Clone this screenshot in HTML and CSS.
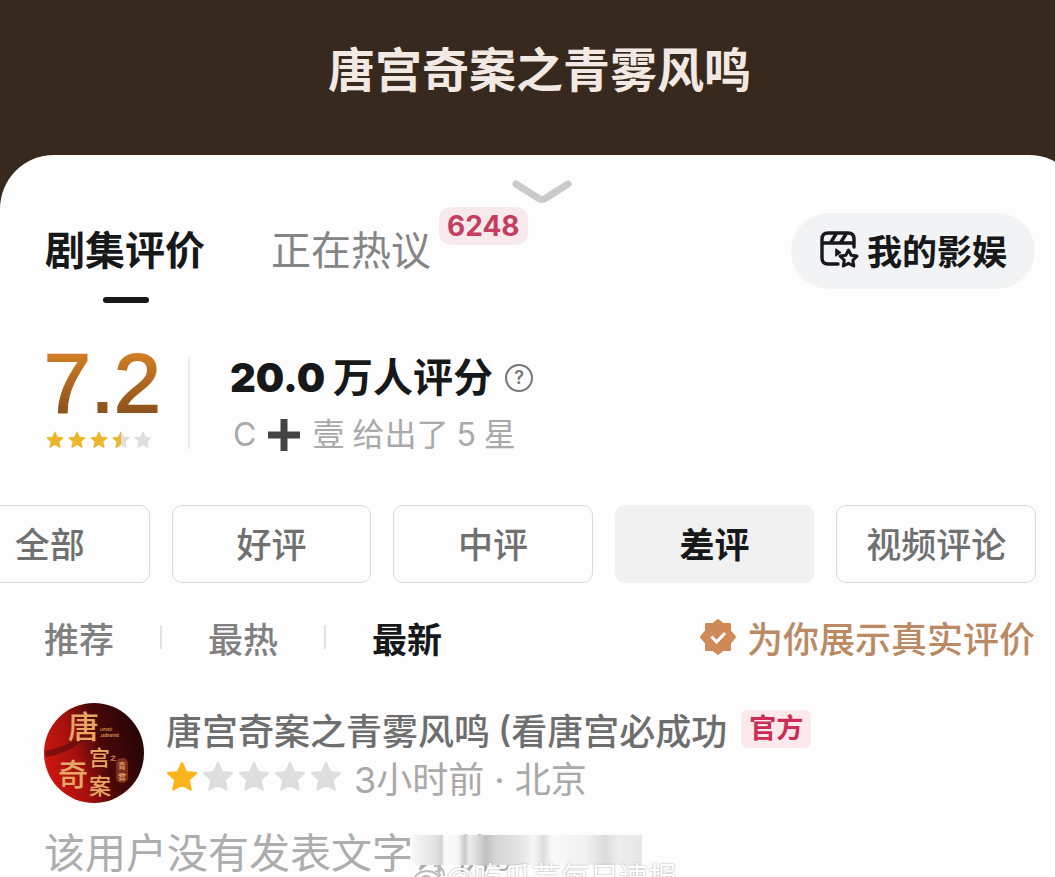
FILE: index.html
```html
<!DOCTYPE html>
<html lang="zh-CN">
<head>
    <meta charset="UTF-8">
    <meta name="viewport" content="width=device-width, initial-scale=1.0">
    <title>唐宫奇案之青雾风鸣</title>
    <link rel="stylesheet" href="styles.css">
</head>
<body>
    <svg class="defs" aria-hidden="true">
        <defs>
            <path id="star" d="M12 1.5l3.1 6.8 7.4.8-5.5 5 1.6 7.4L12 17.8l-6.6 3.7L7 14.1l-5.5-5 7.4-.8z" stroke-width="1.6" stroke-linejoin="round"/>
            <clipPath id="half"><rect x="0" y="0" width="12" height="24"/></clipPath>
        </defs>
    </svg>

    <header class="top-bar">
        <h1>唐宫奇案之青雾风鸣</h1>
    </header>

    <main class="sheet">
        <button class="collapse" aria-label="收起">
            <svg width="60" height="28" viewBox="0 0 60 28"><path d="M4 5l22 14q4 3 8 0L56 5" fill="none" stroke="#cacaca" stroke-width="7" stroke-linecap="round"/></svg>
        </button>

        <nav class="tabs">
            <a href="#reviews" class="tab active">剧集评价</a>
            <a href="#talk" class="tab">正在热议<span class="count">6248</span></a>
            <button class="mine">
                <svg width="40" height="38" viewBox="0 0 40 38" fill="none" stroke="#17181a" stroke-width="3.4" stroke-linejoin="round" stroke-linecap="round">
                    <path d="M19 34H9q-6 0-6-6V9q0-6 6-6h20q6 0 6 6v8M3 13h32M17 4l-5 8M27 4l-5 8"/>
                    <path d="M17 19l5 3.500-5 3.500z" fill="#17181a" stroke-width="1"/>
                    <path d="M29.500 20l2.700 5.200 5.800.9-4.200 4.100 1 5.800-5.300-2.700-5.200 2.700 1-5.800-4.200-4.100 5.800-.9z" stroke-width="3"/>
                </svg>
                我的影娱
            </button>
        </nav>

        <section class="summary" id="reviews">
            <div class="score">
                <strong>7.2</strong>
                <div class="stars small">
                    <svg viewBox="0 0 24 24"><use href="#star"/></svg>
                    <svg viewBox="0 0 24 24"><use href="#star"/></svg>
                    <svg viewBox="0 0 24 24"><use href="#star"/></svg>
                    <svg viewBox="0 0 24 24"><use href="#star" class="off"/><use href="#star" clip-path="url(#half)"/></svg>
                    <svg viewBox="0 0 24 24"><use href="#star" class="off"/></svg>
                </div>
            </div>
            <div class="people">
                <div class="total">
                    <span class="num">20.0</span><span>万人评分</span>
                    <button class="help" aria-label="评分说明">?</button>
                </div>
                <p class="latest">
                    <span>C</span>
                    <svg width="32" height="32" viewBox="0 0 32 32"><path d="M16 0v32M0 16h32" stroke="#444" stroke-width="7"/></svg>
                    <span>壹</span><span>给出了</span><span>5</span><span>星</span>
                </p>
            </div>
        </section>

        <div class="filters">
            <button class="filter">全部</button>
            <button class="filter">好评</button>
            <button class="filter">中评</button>
            <button class="filter active">差评</button>
            <button class="filter">视频评论</button>
        </div>

        <div class="sort">
            <button>推荐</button>
            <button>最热</button>
            <button class="active">最新</button>
            <p class="real">
                <svg width="38" height="38" viewBox="0 0 38 38">
                    <path d="M19 2l5 4h7v7l5 6-5 6v7h-7l-5 4-5-4H7v-7l-5-6 5-6V6h7z" fill="#d08a58" stroke="#d08a58" stroke-width="2" stroke-linejoin="round"/>
                    <path d="M12.500 18.500l5 5.500 8.500-9" fill="none" stroke="#fff" stroke-width="3"/>
                </svg>
                <span>为你展示真实评价</span>
            </p>
        </div>

        <article class="review">
            <div class="author">
                <svg class="avatar" viewBox="0 0 100 100" role="img" aria-label="唐宫奇案">
                    <defs>
                        <linearGradient id="red" x1="0" y1=".7" x2="1" y2=".4">
                            <stop offset="0" stop-color="#d4160f"/>
                            <stop offset=".35" stop-color="#a3100d"/>
                            <stop offset=".6" stop-color="#4a0808"/>
                            <stop offset="1" stop-color="#260506"/>
                        </linearGradient>
                    </defs>
                    <circle cx="50" cy="50" r="50" fill="url(#red)"/>
                    <path d="M1 48Q24 44 40 30L38 38Q24 50 2 54z" fill="#3d0808" opacity=".5"/>
                    <g class="brush">
                        <text x="24" y="35" font-size="31">唐</text>
                        <text x="45" y="62" font-size="21">宫</text>
                        <text x="14" y="82" font-size="30">奇</text>
                        <text x="45" y="91" font-size="22">案</text>
                        <text x="66" y="57" font-size="6">之</text>
                        <text x="56" y="28" font-size="4">Unveil</text>
                        <text x="56" y="34" font-size="4">Jadewind</text>
                    </g>
                    <rect x="72" y="55" width="12" height="25" rx="5" fill="#7c2b1e"/>
                    <g class="brush"><text x="74" y="66" font-size="8">青</text><text x="74" y="77" font-size="8">雾</text></g>
                </svg>
                <div class="info">
                    <div class="name">唐宫奇案之青雾风鸣<span class="paren">(</span>看唐宫必成功<span class="official">官方</span></div>
                    <div class="meta">
                        <div class="stars">
                            <svg viewBox="0 0 24 24"><use href="#star"/></svg>
                            <svg viewBox="0 0 24 24"><use href="#star" class="off"/></svg>
                            <svg viewBox="0 0 24 24"><use href="#star" class="off"/></svg>
                            <svg viewBox="0 0 24 24"><use href="#star" class="off"/></svg>
                            <svg viewBox="0 0 24 24"><use href="#star" class="off"/></svg>
                        </div>
                        <span>3小时前 · 北京</span>
                    </div>
                </div>
            </div>
            <div class="content">
                <p>该用户没有发表文字评价。</p>
                <div class="smear"></div>
                <div class="watermark">
                    <svg width="34" height="30" viewBox="0 0 34 30" fill="none" stroke="#bbb" stroke-width="2"><ellipse cx="15" cy="18" rx="13" ry="10"/><circle cx="14" cy="19" r="6"/><path d="M22 3q10 0 10 10M23 8q5 0 5 5"/></svg>
                    @吃瓜芸每日速报
                </div>
            </div>
        </article>
    </main>
</body>
</html>
```

FILE: styles.css
```css
* {
    margin: 0;
    padding: 0;
    box-sizing: border-box;
}

body {
    display: flex;
    flex-direction: column;
    height: 100vh;
    overflow: hidden;
    font-family: Inter, 'Noto Sans CJK SC', sans-serif;
    background: #38291e;
    color: #17181a;
}

button {
    font: inherit;
    color: inherit;
    background: none;
    border: none;
    cursor: pointer;
}

a {
    color: inherit;
    text-decoration: none;
}

.defs {
    position: absolute;
    width: 0;
    height: 0;
}

.top-bar {
    padding: 36px 0 51px 24px;
    text-align: center;
}

h1 {
    font-size: 47px;
    line-height: 68px;
    font-weight: 700;
    color: #f3e9e4;
}

/* the panel runs a little past the right edge */
.sheet {
    flex: 1;
    min-height: 0;
    margin-right: -28px;
    padding-right: 28px;
    overflow: hidden;
    background: #fcfdfc;
    border-radius: 54px 54px 0 0;
}

.collapse {
    display: block;
    margin: 24px auto 0;
    padding-left: 28px;
}

.collapse svg {
    display: block;
}

/* tabs */
.tabs {
    display: flex;
    align-items: center;
    gap: 66px;
    height: 80px;
    margin-top: 4px;
    padding: 0 20px 0 45px;
}

.tab {
    position: relative;
    font-size: 40px;
    line-height: 60px;
    color: #858585;
}

.tab.active {
    color: #17181a;
    font-weight: 700;
}

.tab.active::after {
    content: '';
    position: absolute;
    left: 50%;
    bottom: -22px;
    width: 46px;
    height: 6px;
    margin-left: -22px;
    border-radius: 3px;
    background: #17181a;
}

.count {
    position: absolute;
    left: 100%;
    top: -14px;
    margin-left: 8px;
    padding: 0 8px;
    border-radius: 12px;
    background: #f8eaec;
    color: #c43e61;
    font-size: 28px;
    line-height: 38px;
    font-weight: 700;
}

.mine {
    display: flex;
    align-items: center;
    gap: 8px;
    height: 76px;
    margin-left: auto;
    padding: 0 28px 4px;
    border-radius: 38px;
    background: #f2f3f4;
    font-size: 35px;
    font-weight: 700;
}

/* score */
.summary {
    display: flex;
    align-items: flex-start;
    margin: 66px 44px 0;
}

.score {
    width: 146px;
    height: 92px;
    border-right: 2px solid #ececec;
}

.score strong {
    display: block;
    margin-top: -20px;
    font-family: 'Liberation Sans', sans-serif;
    font-size: 84px;
    line-height: 92px;
    font-weight: 400;
    background: linear-gradient(#d07c24 20%, #8f531c 80%);
    -webkit-background-clip: text;
    background-clip: text;
    -webkit-text-stroke: 2px transparent;
    color: transparent;
}

.stars {
    display: flex;
    gap: 4px;
}

.stars svg {
    width: 32px;
    height: 32px;
    fill: #fbb51c;
    stroke: #fbb51c;
}

.stars .off {
    fill: #dedede;
    stroke: #dedede;
}

.stars.small {
    padding: 2px;
}

.stars.small svg {
    width: 18px;
    height: 18px;
    fill: #ecb62c;
    stroke: #ecb62c;
}

.people {
    padding-left: 40px;
}

.total {
    display: flex;
    align-items: center;
    height: 42px;
    font-size: 40px;
    line-height: 42px;
    font-weight: 700;
}

.total .num {
    font-weight: 900;
    margin-right: 8px;
}

.help {
    width: 28px;
    height: 28px;
    margin-left: 12px;
    border: 2px solid #777;
    border-radius: 50%;
    color: #777;
    font-size: 18px;
    line-height: 24px;
    font-weight: 600;
}

.latest {
    display: flex;
    align-items: center;
    gap: 8px;
    margin-top: 12px;
    padding-left: 3px;
    color: #a9a9a9;
    font-size: 32px;
    line-height: 48px;
}

.latest svg {
    margin: 0 4px;
}

/* filters */
.filters {
    display: flex;
    gap: 22px;
    margin: 46px 19px 0 -50px;
}

.filter {
    flex: 1;
    height: 78px;
    padding-bottom: 4px;
    border: 1px solid #dadada;
    border-radius: 10px;
    color: #707070;
    font-size: 35px;
    font-weight: 500;
}

.filter.active {
    background: #f1f1f1;
    border-color: #f1f1f1;
    color: #17181a;
    font-weight: 700;
}

.sort {
    display: flex;
    align-items: center;
    height: 52px;
    margin: 28px 20px 0 44px;
    color: #808080;
    font-size: 35px;
    font-weight: 500;
}

.sort button {
    display: flex;
    align-items: center;
}

.sort button + button::before {
    content: '';
    width: 2px;
    height: 24px;
    margin: 0 46px;
    background: #e2e2e2;
}

.sort .active {
    color: #17181a;
    font-weight: 700;
}

.real {
    display: flex;
    align-items: center;
    gap: 10px;
    margin-left: auto;
    color: #b98a64;
    font-size: 36px;
}

/* review */
.review {
    padding: 40px 44px 0;
}

.author {
    display: flex;
    gap: 22px;
}

.avatar {
    width: 100px;
    height: 100px;
}

.brush {
    fill: #e5a765;
    font-family: 'Noto Sans CJK SC', sans-serif;
    font-weight: 500;
}

.name {
    display: flex;
    align-items: center;
    height: 52px;
    color: #6e6e6e;
    font-size: 36px;
    font-weight: 500;
}

.paren {
    margin-left: 8px;
}

.official {
    margin-left: 14px;
    padding: 0 8px;
    border-radius: 6px;
    background: #fbe9ec;
    color: #cc2c55;
    font-size: 27px;
    line-height: 38px;
    font-weight: 700;
}

.meta {
    display: flex;
    align-items: center;
    gap: 12px;
    height: 44px;
    color: #a9a9a9;
    font-size: 36px;
}

.content {
    position: relative;
    margin-top: 20px;
    color: #adadad;
    font-size: 41px;
    line-height: 60px;
}

/* blurred strip and account mark lying over the text */
.smear {
    position: absolute;
    left: 368px;
    top: 12px;
    width: 230px;
    height: 30px;
    background: linear-gradient(90deg, #f8f8f8 0, #e2e2e2 10%, #d2d2d2 13%, #fafafa 14%, #f6f6f6 20%, #c8c8c8 23%, #ececec 25%, #dcdcdc 28%, #c0c0c0 32%, #d4d4d4 36%, #e6e6e6 48%, #f6f6f6 53%, #dcdcdc 57%, #f9f9f9 61%, #f0f0f0 76%, #dcdcdc 84%, #ededed 90%, #e6e6e6);
}

.watermark {
    position: absolute;
    left: 368px;
    top: 34px;
    display: flex;
    align-items: center;
    color: #fff;
    font-size: 29px;
    line-height: 42px;
    text-shadow: 0 0 2px #999;
    white-space: nowrap;
}
```
